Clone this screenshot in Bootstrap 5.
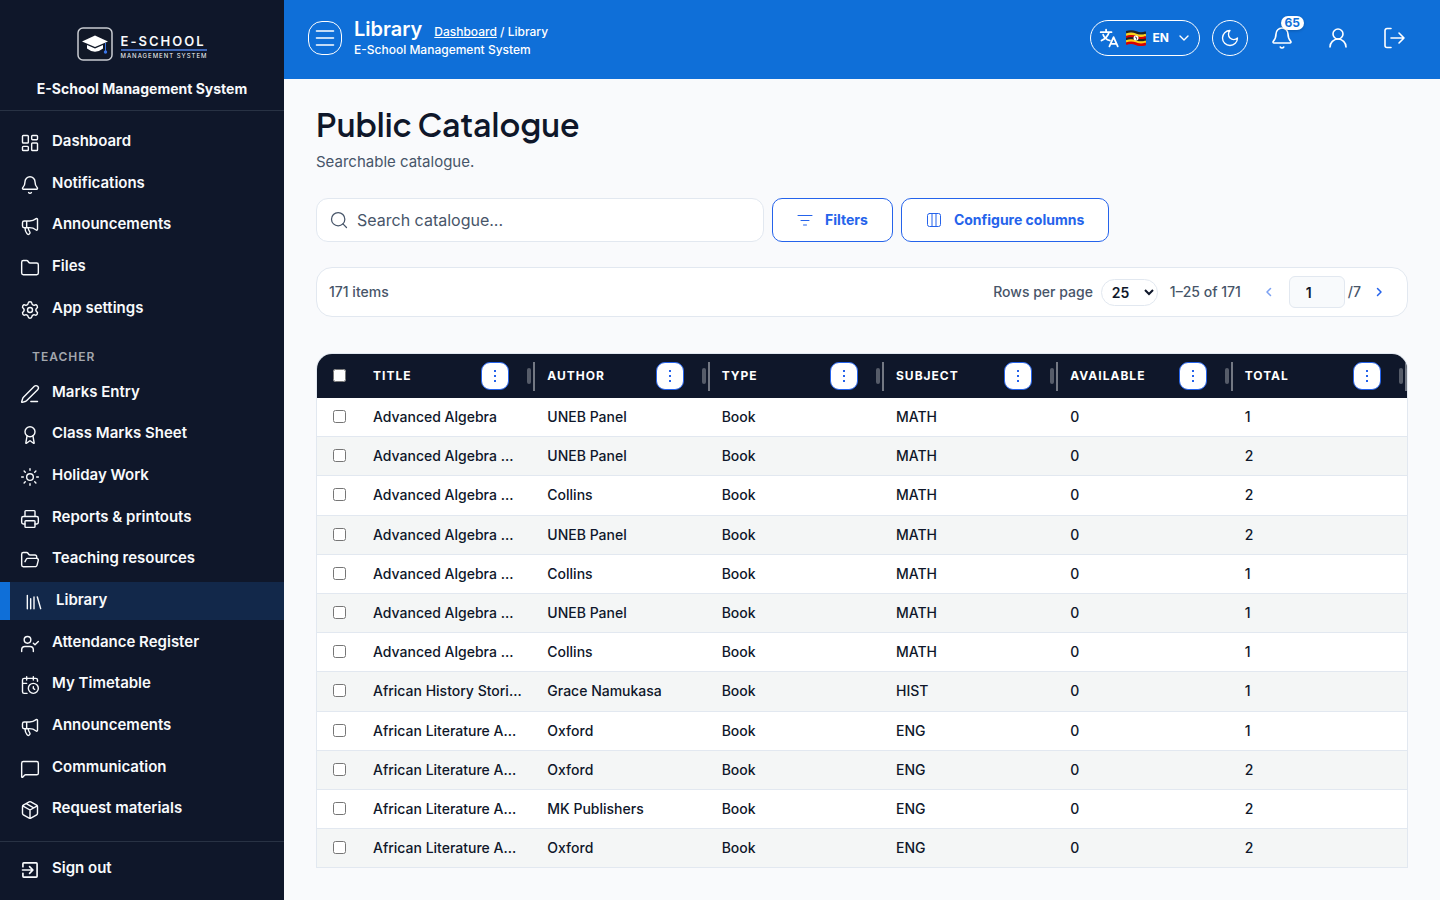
<!DOCTYPE html>
<html lang="en">
<head>
<meta charset="utf-8">
<meta name="viewport" content="width=device-width, initial-scale=1">
<title>Library – E-School Management System</title>
<link href="https://cdn.jsdelivr.net/npm/bootstrap@5.3.0/dist/css/bootstrap.min.css" rel="stylesheet">
<style>
:root{--navy:#0f172a;--brand:#0f6fd8;--accent:#2563eb;--line:#e2e8f0;--muted:#475569;--page:#f9fafc}
body{font-family:Inter,sans-serif;background:var(--page);color:var(--navy);font-size:14px}
svg.ico{width:20px;height:20px;flex:none;fill:none;stroke:currentColor;stroke-width:1.5;stroke-linecap:round;stroke-linejoin:round}
svg.ico-lg{width:24px;height:24px}
svg.ico-sm{width:16px;height:16px}
/* sidebar */
.sidebar{width:284px;flex:none;background:var(--navy);color:#f8fafc}
.sidebar svg.ico{stroke-width:1.7}
.brand{height:111px;padding-top:27px;border-bottom:1px solid #283244;gap:18px}
.brand-name{font-size:14px;line-height:20px;font-weight:700}
.logo-text{padding-top:4px}
.logo-word{font-size:13px;line-height:16px;font-weight:600;letter-spacing:2px}
.logo-sub{font-size:6px;line-height:8px;border-top:2px solid #3f66b5;letter-spacing:1px;padding-top:1px}
.side-menu{padding:12px 0 13px}
.side-link{height:38px;gap:12px;padding:0 20px;font-size:15px;line-height:20px;font-weight:600;color:inherit;text-decoration:none}
.side-link span{padding-bottom:2px}
.side-link svg{margin-top:2px}
.side-link.active{background:#12284a;border-left:10px solid var(--brand);padding-left:14px}
.side-title{font-size:12px;line-height:16px;font-weight:600;letter-spacing:1px;color:#a3a7ae;margin:18px 32px 5px}
.side-foot{border-top:1px solid #283244;padding:8px 0 12px}
/* top bar */
.topbar{background:var(--brand);color:#fff;min-height:79px;padding:0 24px 3px;gap:12px}
.topbar button,.topbar a{color:inherit}
.topbar svg.ico{stroke-width:1.6}
.menu-btn{width:34px;height:34px;border:1px solid #fff;border-radius:14px}
.bar-title{font-size:20px;line-height:24px;font-weight:600}
.bar-text{font-size:12px;line-height:18px;font-weight:500}
.lang-btn{height:36px;border:1px solid #fff;border-radius:18px;padding:0 7px 0 8px;font-size:12px;font-weight:700;gap:7px}
.round-btn{width:36px;height:36px;border:1px solid #fff}
.icon-btn{width:44px;height:44px}
.count{top:0;right:0;font-size:12px;line-height:14px;font-weight:700;padding:0 4px;border-radius:7px;background:#fff;color:var(--brand);box-shadow:0 1px 3px #0003}
/* content */
.content{padding:24px 32px 32px}
.page-title{font-family:"Plus Jakarta Sans",Inter,sans-serif;font-size:32px;line-height:42px;font-weight:600;margin:0 0 6px}
.page-sub{font-size:15px;line-height:22px;color:var(--muted);margin:0 0 25px}
.search{width:448px;height:44px;background:#fff;border:1px solid var(--line);border-radius:12px;padding:0 12px;gap:8px;color:var(--muted)}
.search input{font-size:16px;color:var(--navy);outline:0}
.search input::placeholder{color:var(--muted);opacity:1}
.tool-btn{height:44px;background:#fff;border:1px solid var(--accent);border-radius:10px;color:var(--accent);font-size:14px;line-height:20px;font-weight:700;padding:0 24px;gap:12px}
.tool-btn svg.ico{stroke-width:1}
.pager{min-height:50px;background:#fff;border:1px solid var(--line);border-radius:16px;padding:0 12px;margin:25px 0 36px;font-size:14px;line-height:20px;font-weight:500;color:var(--muted)}
.pager select{width:57px;height:27px;border:1px solid var(--line);border-radius:14px;background:#fff;color:var(--navy);font-size:14px;font-weight:600;padding:0 0 0 6px}
.pager input{width:56px;height:32px;border:1px solid var(--line);border-radius:6px;background:#f8fafc;color:var(--navy);font-weight:600;padding:0 16px}
.page-total{padding:0 2px 0 3px}
.page-btn,.page-btn:disabled{width:32px;height:32px;color:var(--accent)}
.page-btn:disabled{opacity:.6}
.table-box{border:1px solid var(--line);border-bottom:0;border-radius:16px 16px 0 0;overflow:hidden;background:#fff}
.books{table-layout:fixed;border-collapse:separate;border-spacing:0}
.books th{background:var(--navy);color:#fff;font-size:12px;line-height:20px;font-weight:700;letter-spacing:1px;height:44px;padding:0 0 0 12px}
.books td{padding:10px 12px;line-height:1.3;font-weight:500;border-bottom:1px solid var(--line)}
.books tbody tr:nth-child(even) td{background:#f4f6f6}
.books .pick{width:44px;padding-left:0;padding-right:0;text-align:center}
.pick input{width:13px;height:13px;display:block;margin:0 auto 1px}
.more{width:28px;height:28px;border:1px solid var(--accent);border-radius:9px;background:#fff;color:var(--accent);margin-right:18px}
.grip{width:4px;height:16px;border-radius:2px;background:#565c69;margin-right:2px}
.rule{width:2px;height:29px;background:#737883}
</style>
</head>
<body>
<svg class="d-none" xmlns="http://www.w3.org/2000/svg">
<symbol id="dash" viewBox="0 0 24 24"><rect width="7" height="9" x="3" y="3" rx="1"/><rect width="7" height="5" x="14" y="3" rx="1"/><rect width="7" height="9" x="14" y="12" rx="1"/><rect width="7" height="5" x="3" y="16" rx="1"/></symbol>
<symbol id="bell" viewBox="0 0 24 24"><path d="M10.268 21a2 2 0 0 0 3.464 0M3.262 15.326A1 1 0 0 0 4 17h16a1 1 0 0 0 .74-1.673C19.41 13.956 18 12.499 18 8A6 6 0 0 0 6 8c0 4.499-1.411 5.956-2.738 7.326"/></symbol>
<symbol id="horn" viewBox="0 0 24 24"><path d="M11 6a13 13 0 0 0 8.4-2.8A1 1 0 0 1 21 4v12a1 1 0 0 1-1.6.8A13 13 0 0 0 11 14H5a2 2 0 0 1-2-2V8a2 2 0 0 1 2-2zM6 14a12 12 0 0 0 2.4 7.2 2 2 0 0 0 3.2-2.4A8 8 0 0 1 10 14M8 6v8"/></symbol>
<symbol id="folder" viewBox="0 0 24 24"><path d="M20 20a2 2 0 0 0 2-2V8a2 2 0 0 0-2-2h-7.900a2 2 0 0 1-1.690-.9L9.600 3.900A2 2 0 0 0 7.930 3H4a2 2 0 0 0-2 2v13a2 2 0 0 0 2 2Z"/></symbol>
<symbol id="gear" viewBox="0 0 24 24"><path d="M9.671 4.136a2.340 2.340 0 0 1 4.659 0 2.340 2.340 0 0 0 3.319 1.915 2.340 2.340 0 0 1 2.330 4.033 2.340 2.340 0 0 0 0 3.831 2.340 2.340 0 0 1-2.330 4.033 2.340 2.340 0 0 0-3.319 1.915 2.340 2.340 0 0 1-4.659 0 2.340 2.340 0 0 0-3.320-1.915 2.340 2.340 0 0 1-2.330-4.033 2.340 2.340 0 0 0 0-3.831A2.340 2.340 0 0 1 6.350 6.051a2.340 2.340 0 0 0 3.319-1.915"/><circle cx="12" cy="12" r="3"/></symbol>
<symbol id="pen" viewBox="0 0 24 24"><path d="M13 21h8M21.174 6.812a1 1 0 0 0-3.986-3.987L3.842 16.174a2 2 0 0 0-.5.830l-1.321 4.352a.5.5 0 0 0 .623.622l4.353-1.320a2 2 0 0 0 .830-.497z"/></symbol>
<symbol id="award" viewBox="0 0 24 24"><path d="m15.477 12.890 1.515 8.526a.5.5 0 0 1-.810.470l-3.580-2.687a1 1 0 0 0-1.197 0l-3.586 2.686a.5.5 0 0 1-.810-.469l1.514-8.526"/><circle cx="12" cy="8" r="6"/></symbol>
<symbol id="sun" viewBox="0 0 24 24"><circle cx="12" cy="12" r="4"/><path d="M12 2v2M12 20v2m-7.070-17.070 1.410 1.410m11.320 11.320 1.410 1.410M2 12h2m16 0h2M6.340 17.660l-1.410 1.410M19.070 4.930l-1.410 1.410"/></symbol>
<symbol id="print" viewBox="0 0 24 24"><path d="M6 18H4a2 2 0 0 1-2-2v-5a2 2 0 0 1 2-2h16a2 2 0 0 1 2 2v5a2 2 0 0 1-2 2h-2M6 9V3a1 1 0 0 1 1-1h10a1 1 0 0 1 1 1v6"/><rect x="6" y="14" width="12" height="8" rx="1"/></symbol>
<symbol id="fopen" viewBox="0 0 24 24"><path d="m6 14 1.500-2.900A2 2 0 0 1 9.240 10H20a2 2 0 0 1 1.940 2.500l-1.540 6a2 2 0 0 1-1.950 1.500H4a2 2 0 0 1-2-2V5a2 2 0 0 1 2-2h3.900a2 2 0 0 1 1.690.9l.810 1.200a2 2 0 0 0 1.670.9H18a2 2 0 0 1 2 2v2"/></symbol>
<symbol id="books" viewBox="0 0 24 24"><path d="m16 6 4 14M12 6v14M8 8v12M4 4v16"/></symbol>
<symbol id="ucheck" viewBox="0 0 24 24"><path d="m16 11 2 2 4-4M16 21v-2a4 4 0 0 0-4-4H6a4 4 0 0 0-4 4v2"/><circle cx="9" cy="7" r="4"/></symbol>
<symbol id="cal" viewBox="0 0 24 24"><path d="M16 14v2.200l1.600 1M16 2v4M21 7.500V6a2 2 0 0 0-2-2H5a2 2 0 0 0-2 2v14a2 2 0 0 0 2 2h3.500M3 10h5M8 2v4"/><circle cx="16" cy="16" r="6"/></symbol>
<symbol id="chat" viewBox="0 0 24 24"><path d="M22 17a2 2 0 0 1-2 2H6.828a2 2 0 0 0-1.414.586l-2.202 2.202A.710.710 0 0 1 2 21.286V5a2 2 0 0 1 2-2h16a2 2 0 0 1 2 2z"/></symbol>
<symbol id="box" viewBox="0 0 24 24"><path d="M11 21.730a2 2 0 0 0 2 0l7-4A2 2 0 0 0 21 16V8a2 2 0 0 0-1-1.730l-7-4a2 2 0 0 0-2 0l-7 4A2 2 0 0 0 3 8v8a2 2 0 0 0 1 1.730zM12 22V12M3.290 7 12 12l8.710-5M7.500 4.270l9 5.150"/></symbol>
<symbol id="exit" viewBox="0 0 24 24"><path d="M3.500 8V4.500a1 1 0 0 1 1-1h15a1 1 0 0 1 1 1v15a1 1 0 0 1-1 1h-15a1 1 0 0 1-1-1V16M3 12h12M11.500 8l4 4-4 4" stroke-width="2"/></symbol>
<symbol id="translate" viewBox="0 0 24 24"><path d="M2 5h13M8.500 2v3M12 5C11 9 7 13 3 15M5 8c1 3 4 6 8 7M12.500 22 17.500 11l5 11M14 19h7" stroke-width="2.100"/></symbol>
<symbol id="moon" viewBox="0 0 24 24"><path d="M12 3a6 6 0 0 0 9 9 9 9 0 1 1-9-9Z"/></symbol>
<symbol id="user" viewBox="0 0 24 24"><circle cx="12" cy="8" r="5"/><path d="M20 21a8 8 0 0 0-16 0"/></symbol>
<symbol id="out" viewBox="0 0 24 24"><path d="M9 21.500H5a2 2 0 0 1-2-2v-15a2 2 0 0 1 2-2h4M9 12h13M17 7l5 5-5 5"/></symbol>
<symbol id="dots" viewBox="0 0 16 16"><path fill="currentColor" stroke="none" d="M7 2h2v2H7zM7 7h2v2H7zM7 12h2v2H7z"/></symbol>
</svg>

<div class="d-flex min-vh-100">
<aside class="sidebar d-flex flex-column">
  <div class="brand d-flex flex-column align-items-center">
    <div class="d-flex align-items-center gap-2">
      <svg width="36" height="34" viewBox="0 0 36 34" aria-hidden="true"><rect x="1" y="1" width="34" height="32" rx="5" fill="#111827" stroke="#c9ccd2" stroke-width="1.500"/><path d="M5 14.500 18 8.500l13 6-13 5.500z" fill="#fff"/><path d="M10 18v3.500q8 6.500 16 0V18l-8 3.500z" fill="#fff"/><path d="M28.500 16v9" stroke="#3b76e8" stroke-width="1"/><circle cx="28.500" cy="25" r="1.700" fill="#3b76e8"/></svg>
      <div class="logo-text"><div class="logo-word">E-SCHOOL</div><div class="logo-sub">MANAGEMENT SYSTEM</div></div>
    </div>
    <div class="brand-name">E-School Management System</div>
  </div>
  <nav class="side-menu flex-grow-1 d-flex flex-column justify-content-between">
    <a class="side-link d-flex align-items-center" href="#"><svg class="ico"><use href="#dash"/></svg><span>Dashboard</span></a>
    <a class="side-link d-flex align-items-center" href="#"><svg class="ico"><use href="#bell"/></svg><span>Notifications</span></a>
    <a class="side-link d-flex align-items-center" href="#"><svg class="ico"><use href="#horn"/></svg><span>Announcements</span></a>
    <a class="side-link d-flex align-items-center" href="#"><svg class="ico"><use href="#folder"/></svg><span>Files</span></a>
    <a class="side-link d-flex align-items-center" href="#"><svg class="ico"><use href="#gear"/></svg><span>App settings</span></a>
    <div class="side-title">TEACHER</div>
    <a class="side-link d-flex align-items-center" href="#"><svg class="ico"><use href="#pen"/></svg><span>Marks Entry</span></a>
    <a class="side-link d-flex align-items-center" href="#"><svg class="ico"><use href="#award"/></svg><span>Class Marks Sheet</span></a>
    <a class="side-link d-flex align-items-center" href="#"><svg class="ico"><use href="#sun"/></svg><span>Holiday Work</span></a>
    <a class="side-link d-flex align-items-center" href="#"><svg class="ico"><use href="#print"/></svg><span>Reports &amp; printouts</span></a>
    <a class="side-link d-flex align-items-center" href="#"><svg class="ico"><use href="#fopen"/></svg><span>Teaching resources</span></a>
    <a class="side-link active d-flex align-items-center" href="#" aria-current="page"><svg class="ico"><use href="#books"/></svg><span>Library</span></a>
    <a class="side-link d-flex align-items-center" href="#"><svg class="ico"><use href="#ucheck"/></svg><span>Attendance Register</span></a>
    <a class="side-link d-flex align-items-center" href="#"><svg class="ico"><use href="#cal"/></svg><span>My Timetable</span></a>
    <a class="side-link d-flex align-items-center" href="#"><svg class="ico"><use href="#horn"/></svg><span>Announcements</span></a>
    <a class="side-link d-flex align-items-center" href="#"><svg class="ico"><use href="#chat"/></svg><span>Communication</span></a>
    <a class="side-link d-flex align-items-center" href="#"><svg class="ico"><use href="#box"/></svg><span>Request materials</span></a>
  </nav>
  <div class="side-foot"><a class="side-link d-flex align-items-center" href="#"><svg class="ico"><use href="#exit"/></svg><span>Sign out</span></a></div>
</aside>

<div class="flex-grow-1 overflow-hidden">
  <header class="topbar d-flex align-items-center">
    <button class="menu-btn btn p-0 d-flex align-items-center justify-content-center" type="button" aria-label="Menu"><svg class="ico ico-lg" viewBox="0 0 24 24"><path d="M3.500 5h17M3.500 12h17M3.500 19h17"/></svg></button>
    <div class="me-auto">
      <div class="d-flex align-items-baseline"><div class="bar-title">Library</div><div class="bar-text ms-2 ps-1"><a href="#">Dashboard</a> / Library</div></div>
      <div class="bar-text">E-School Management System</div>
    </div>
    <button class="lang-btn btn d-flex align-items-center" type="button"><svg class="ico"><use href="#translate"/></svg><svg width="20" height="16" viewBox="0 0 20 16" aria-hidden="true"><g fill="none" stroke-width="2.600"><path stroke="#222" d="M0 2.500q5-2 10 0t10 0"/><path stroke="#fcd116" d="M0 4.900q5-2 10 0t10 0"/><path stroke="#d90000" d="M0 7.300q5-2 10 0t10 0"/><path stroke="#222" d="M0 9.400q5-2 10 0t10 0"/><path stroke="#fcd116" d="M0 11.600q5-2 10 0t10 0"/><path stroke="#d90000" d="M0 13.800q5-2 10 0t10 0"/></g><circle cx="10" cy="8" r="2.500" fill="#fff"/><path d="M9 7l1.500.5v2" stroke="#555" fill="none"/></svg><span>EN</span><svg class="ico ico-sm" viewBox="0 0 16 16"><path d="m4 6 4 4 4-4" stroke-width="1.400"/></svg></button>
    <button class="round-btn btn p-0 rounded-circle d-flex align-items-center justify-content-center" type="button" aria-label="Dark mode"><svg class="ico"><use href="#moon"/></svg></button>
    <button class="icon-btn btn border-0 p-0 position-relative d-flex align-items-center justify-content-center" type="button" aria-label="Notifications"><svg class="ico ico-lg"><use href="#bell"/></svg><span class="count position-absolute">65</span></button>
    <button class="icon-btn btn border-0 p-0 d-flex align-items-center justify-content-center" type="button" aria-label="Profile"><svg class="ico ico-lg"><use href="#user"/></svg></button>
    <button class="icon-btn btn border-0 p-0 d-flex align-items-center justify-content-center" type="button" aria-label="Log out"><svg class="ico ico-lg"><use href="#out"/></svg></button>
  </header>

  <main class="content">
    <h1 class="page-title">Public Catalogue</h1>
    <p class="page-sub">Searchable catalogue.</p>
    <div class="d-flex gap-2">
      <label class="search d-flex align-items-center"><svg class="ico" viewBox="0 0 24 24"><circle cx="11" cy="11" r="8"/><path d="m21 21-4.300-4.300"/></svg><input class="border-0 bg-transparent p-0 flex-grow-1" type="search" aria-label="Search catalogue" placeholder="Search catalogue..."></label>
      <button class="tool-btn btn d-flex align-items-center" type="button"><svg class="ico ico-sm" viewBox="0 0 16 16"><path d="M1 3.500h14M4 8.500h8M6.500 13h3"/></svg>Filters</button>
      <button class="tool-btn btn d-flex align-items-center" type="button"><svg class="ico ico-sm" viewBox="0 0 16 16"><rect x="1.500" y="1.500" width="13" height="13" rx="2"/><path d="M6 1.500v13M10 1.500v13"/></svg>Configure columns</button>
    </div>
    <div class="pager d-flex align-items-center">
      <span class="me-auto">171 items</span>
      <label for="rows" class="me-2">Rows per page</label>
      <select id="rows"><option>25</option><option>50</option><option>100</option></select>
      <span class="ms-2 ps-1 me-2 pe-1">1–25 of 171</span>
      <button class="page-btn btn border-0 p-0 d-flex align-items-center justify-content-center me-1" type="button" disabled aria-label="Previous page"><svg class="ico ico-sm" viewBox="0 0 16 16"><path d="m9.500 4.500-3.500 3.500 3.500 3.500"/></svg></button>
      <input type="text" value="1" aria-label="Page">
      <span class="page-total">/7</span>
      <button class="page-btn btn border-0 p-0 d-flex align-items-center justify-content-center" type="button" aria-label="Next page"><svg class="ico ico-sm" viewBox="0 0 16 16"><path d="m6.500 4.500 3.500 3.500-3.500 3.500"/></svg></button>
    </div>
    <div class="table-box">
      <table class="books w-100">
        <thead><tr id="head"><th class="pick"><input type="checkbox" aria-label="Select all"></th></tr></thead>
        <tbody id="rowsBody"></tbody>
      </table>
    </div>
  </main>
</div>
</div>
<script src="https://cdn.jsdelivr.net/npm/bootstrap@5.3.0/dist/js/bootstrap.bundle.min.js"></script>
<script>
const heads = ['TITLE','AUTHOR','TYPE','SUBJECT','AVAILABLE','TOTAL'];
const books = [
  ['Advanced Algebra','UNEB Panel','MATH',1],
  ['Advanced Algebra …','UNEB Panel','MATH',2],
  ['Advanced Algebra …','Collins','MATH',2],
  ['Advanced Algebra …','UNEB Panel','MATH',2],
  ['Advanced Algebra …','Collins','MATH',1],
  ['Advanced Algebra …','UNEB Panel','MATH',1],
  ['Advanced Algebra …','Collins','MATH',1],
  ['African History Stori…','Grace Namukasa','HIST',1],
  ['African Literature A…','Oxford','ENG',1],
  ['African Literature A…','Oxford','ENG',2],
  ['African Literature A…','MK Publishers','ENG',2],
  ['African Literature A…','Oxford','ENG',2]
];
document.getElementById('head').insertAdjacentHTML('beforeend', heads.map(h =>
  `<th scope="col"><div class="d-flex align-items-center"><span class="me-auto">${h}</span><button class="more btn p-0 d-flex align-items-center justify-content-center" type="button" aria-label="${h} options"><svg class="ico ico-sm"><use href="#dots"/></svg></button><span class="grip"></span><span class="rule"></span></div></th>`).join(''));
document.getElementById('rowsBody').innerHTML = books.map(([t,a,s,n]) =>
  `<tr><td class="pick"><input type="checkbox" aria-label="Select ${t}"></td><td class="text-nowrap">${t}</td><td>${a}</td><td>Book</td><td>${s}</td><td>0</td><td>${n}</td></tr>`).join('');
</script>
</body>
</html>
